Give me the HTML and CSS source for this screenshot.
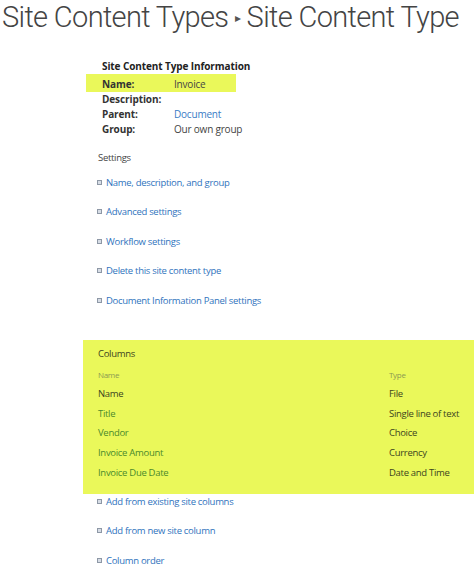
FILE: index.html
```html
<!DOCTYPE html>
<html>
<head>
<meta charset="utf-8">
<link rel="stylesheet" href="styles.css">
</head>
<body>
<h1 class="title">Site Content Types <span class="sep">&#9656;</span> Site Content Type</h1>

<div class="info">
  <div class="info-head">Site Content Type Information</div>
  <div class="info-row hl"><span class="lbl">Name:</span><span class="val">Invoice</span></div>
  <div class="info-row"><span class="lbl">Description:</span><span class="val"></span></div>
  <div class="info-row"><span class="lbl">Parent:</span><a class="val link">Document</a></div>
  <div class="info-row"><span class="lbl">Group:</span><span class="val">Our own group</span></div>
</div>

<div class="settings">
  <div class="sec-title">Settings</div>
  <ul class="links">
    <li><span class="bullet"></span><a>Name, description, and group</a></li>
    <li><span class="bullet"></span><a>Advanced settings</a></li>
    <li><span class="bullet"></span><a>Workflow settings</a></li>
    <li><span class="bullet"></span><a>Delete this site content type</a></li>
    <li><span class="bullet"></span><a>Document Information Panel settings</a></li>
  </ul>
</div>

<div class="columns">
  <div class="sec-title">Columns</div>
  <div class="col-row col-head"><span class="c1">Name</span><span class="c2">Type</span></div>
  <div class="col-row"><span class="c1 dark">Name</span><span class="c2">File</span></div>
  <div class="col-row"><span class="c1">Title</span><span class="c2">Single line of text</span></div>
  <div class="col-row"><span class="c1">Vendor</span><span class="c2">Choice</span></div>
  <div class="col-row"><span class="c1">Invoice Amount</span><span class="c2">Currency</span></div>
  <div class="col-row"><span class="c1">Invoice Due Date</span><span class="c2">Date and Time</span></div>
</div>

<ul class="links bottom">
  <li><span class="bullet"></span><a>Add from existing site columns</a></li>
  <li><span class="bullet"></span><a>Add from new site column</a></li>
  <li><span class="bullet"></span><a>Column order</a></li>
</ul>
</body>
</html>
```

FILE: styles.css
```css
html, body {
  margin: 0;
  padding: 0;
  background: #ffffff;
}
body {
  font-family: "Open Sans", "Noto Sans", sans-serif;
  font-size: 9.5px;
  letter-spacing: -0.3px;
  color: #444444;
  width: 474px;
  height: 572px;
  overflow: hidden;
}
.title {
  margin: 0;
  padding: 0 0 0 2px;
  font-family: Roboto, "Open Sans", sans-serif;
  font-weight: 300;
  font-size: 29px;
  line-height: 34px;
  height: 34px;
  color: #444444;
  white-space: nowrap;
  letter-spacing: -0.65px;
}
.sep {
  font-size: 12px;
  vertical-align: 5px;
  color: #555;
}
.info {
  margin-top: 25px;
  padding-left: 102px;
}
.info-head {
  font-weight: 700;
  font-size: 10px;
  letter-spacing: -0.1px;
  color: #222;
  line-height: 15px;
  height: 18px;
}
.info-row {
  display: flex;
  line-height: 15px;
  height: 15px;
}
.info-row .val {
  font-size: 10px;
  letter-spacing: -0.2px;
}
.info-row.hl {
  position: relative;
  isolation: isolate;
}
.info-row.hl::before {
  content: "";
  position: absolute;
  left: -16px;
  top: -3px;
  width: 150px;
  height: 18px;
  background: #eaf85a;
  z-index: -1;
}
.lbl {
  width: 72px;
  font-weight: 700;
  font-size: 10px;
  letter-spacing: -0.1px;
  color: #333;
}
.link {
  color: #3a7cc6;
}
.links a {
  color: #2f73bd;
}
.settings {
  margin-top: 13px;
  padding-left: 98px;
}
.sec-title {
  line-height: 15px;
  color: #444;
}
.links {
  list-style: none;
  margin: 10px 0 0 0;
  padding: 0;
}
.links li {
  display: flex;
  align-items: flex-start;
  height: 29.4px;
  line-height: 15px;
}
.links .bullet {
  width: 3px;
  height: 3px;
  border: 1px solid #8e98a6;
  background: #d7dde6;
  margin: 5px 4px 0 -1px;
  flex: none;
}
.columns {
  margin: 18px 0 0 83px;
  background: #eaf85a;
  padding: 6px 0 10px 15px;
  height: 138px;
}
.columns .sec-title {
  margin-bottom: 6px;
  color: #3c4420;
}
.col-row {
  display: flex;
  line-height: 15px;
  height: 19.7px;
  color: #4a8a2c;
}
.col-row .c1 { width: 291px; }
.col-row .c2 { color: #3c4420; }
.col-row .dark { color: #3c4420; }
.col-head {
  font-size: 8px;
  color: #8a9a52;
  height: 19px;
}
.col-head .c2 { color: #8a9a52; }
.links.bottom {
  margin: 0 0 0 98px;
}
```
